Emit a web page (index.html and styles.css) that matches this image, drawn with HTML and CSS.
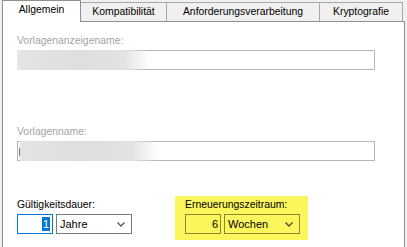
FILE: index.html
```html
<!DOCTYPE html>
<html lang="de">
<head>
    <meta charset="UTF-8">
    <title>Vorlageneigenschaften</title>
    <link rel="stylesheet" href="styles.css">
</head>
<body>

    <!-- Tab strip -->
    <div class="tabs">
        <div class="tab active tab-general">Allgemein</div>
        <div class="tab tab-compat">Kompatibilität</div>
        <div class="tab tab-request">Anforderungsverarbeitung</div>
        <div class="tab tab-crypto">Kryptografie</div>
    </div>

    <!-- General page -->
    <div class="panel">
        <div class="field disabled">
            <span class="label">Vorlagenanzeigename:</span>
            <div class="textbox"><span class="blur blur-short"></span></div>
        </div>

        <div class="field disabled field-name">
            <span class="label">Vorlagenname:</span>
            <div class="textbox"><span class="caret"></span><span class="blur blur-long"></span></div>
        </div>

        <div class="period-row">
            <div class="group group-validity">
                <span class="label">Gültigkeitsdauer:</span>
                <div class="combo-row">
                    <div class="num focus"><span class="sel">1</span></div>
                    <div class="combo">
                        <span>Jahre</span>
                        <svg width="8" height="5" viewBox="0 0 8 5"><path d="M0.5 0.5 L4 4 L7.5 0.5" fill="none" stroke="#555" stroke-width="1.3"/></svg>
                    </div>
                </div>
            </div>

            <div class="group highlight">
                <span class="label">Erneuerungszeitraum:</span>
                <div class="combo-row">
                    <div class="num">6</div>
                    <div class="combo">
                        <span>Wochen</span>
                        <svg width="8" height="5" viewBox="0 0 8 5"><path d="M0.5 0.5 L4 4 L7.5 0.5" fill="none" stroke="#4a4820" stroke-width="1.3"/></svg>
                    </div>
                </div>
            </div>
        </div>
    </div>

</body>
</html>
```

FILE: styles.css
```css
* {
    margin: 0;
    padding: 0;
    box-sizing: border-box;
    font-family: "Liberation Sans", Arial, sans-serif;
}
body {
    width: 407px;
    height: 247px;
    overflow: hidden;
    background: #f0f0f0;
    font-size: 10.4px;
    line-height: 13px;
    color: #000;
}

/* tabs */
.tabs {
    display: flex;
    align-items: flex-start;
    height: 21px;
    padding-left: 2px;
}
.tab {
    height: 19px;
    margin-top: 2px;
    margin-left: -1px;
    padding-top: 2px;
    border: 1px solid #a8a8a8;
    border-bottom: none;
    background: #f0f0f0;
    text-align: center;
    white-space: nowrap;
}
.tab.active {
    height: 22px;
    margin-top: 0;
    margin-left: 0;
    background: #fff;
    border-color: #909090;
    position: relative;
    z-index: 1;
}
.tab-general { width: 79px; }
.tab-compat { width: 87px; }
.tab-request { width: 154px; }
.tab-crypto { width: 84px; }

/* page (cut off at the bottom of the shot) */
.panel {
    margin-left: 2px;
    width: 403px;
    height: 226px;
    background: #fff;
    border: 1px solid #909090;
    border-bottom: none;
    padding: 12px 0 0 14px;
}
.label {
    display: block;
    height: 13px;
    white-space: nowrap;
}
.disabled .label { color: #a4a4a4; }
.textbox {
    position: relative;
    margin-top: 3px;
    width: 358px;
    height: 20px;
    border: 1px solid #b6b6b6;
}
.field-name { margin-top: 55px; }
.blur {
    position: absolute;
    top: -1px;
    bottom: -1px;
    left: -1px;
    background: linear-gradient(90deg, #e4e4e4 0%, #dedede 45%, #e2e2e2 80%, rgba(255, 255, 255, 0) 100%);
}
.blur-short { width: 133px; }
.blur-long { left: 2px; width: 138px; }
.caret {
    position: absolute;
    left: 1px;
    top: 6px;
    width: 1px;
    height: 8px;
    background: #777;
}

/* period fields */
.period-row {
    display: flex;
    margin-top: 35px;
}
.group { padding-top: 2px; }
.group-validity { width: 158px; }
.combo-row {
    display: flex;
    gap: 3px;
    margin-top: 3px;
}
.num {
    width: 36px;
    height: 20px;
    border: 1px solid #7a7a7a;
    background: #fff;
    text-align: right;
    padding: 2px 2px 0 0;
    line-height: 14px;
    font-size: 11px;
}
.num.focus { border-color: #0078d7; }
.sel {
    display: inline-block;
    padding: 0 1px;
    background: #0078d7;
    color: #fff;
}
.combo {
    width: 76px;
    height: 20px;
    border: 1px solid #7a7a7a;
    background: #fff;
    display: flex;
    align-items: center;
    justify-content: space-between;
    padding: 0 6px 0 3px;
    font-size: 11px;
}
.highlight {
    background: #fbf65c;
    padding: 2px 8px 6px 10px;
}
.highlight .num,
.highlight .combo {
    background: transparent;
    border-color: #8a8730;
}
```
